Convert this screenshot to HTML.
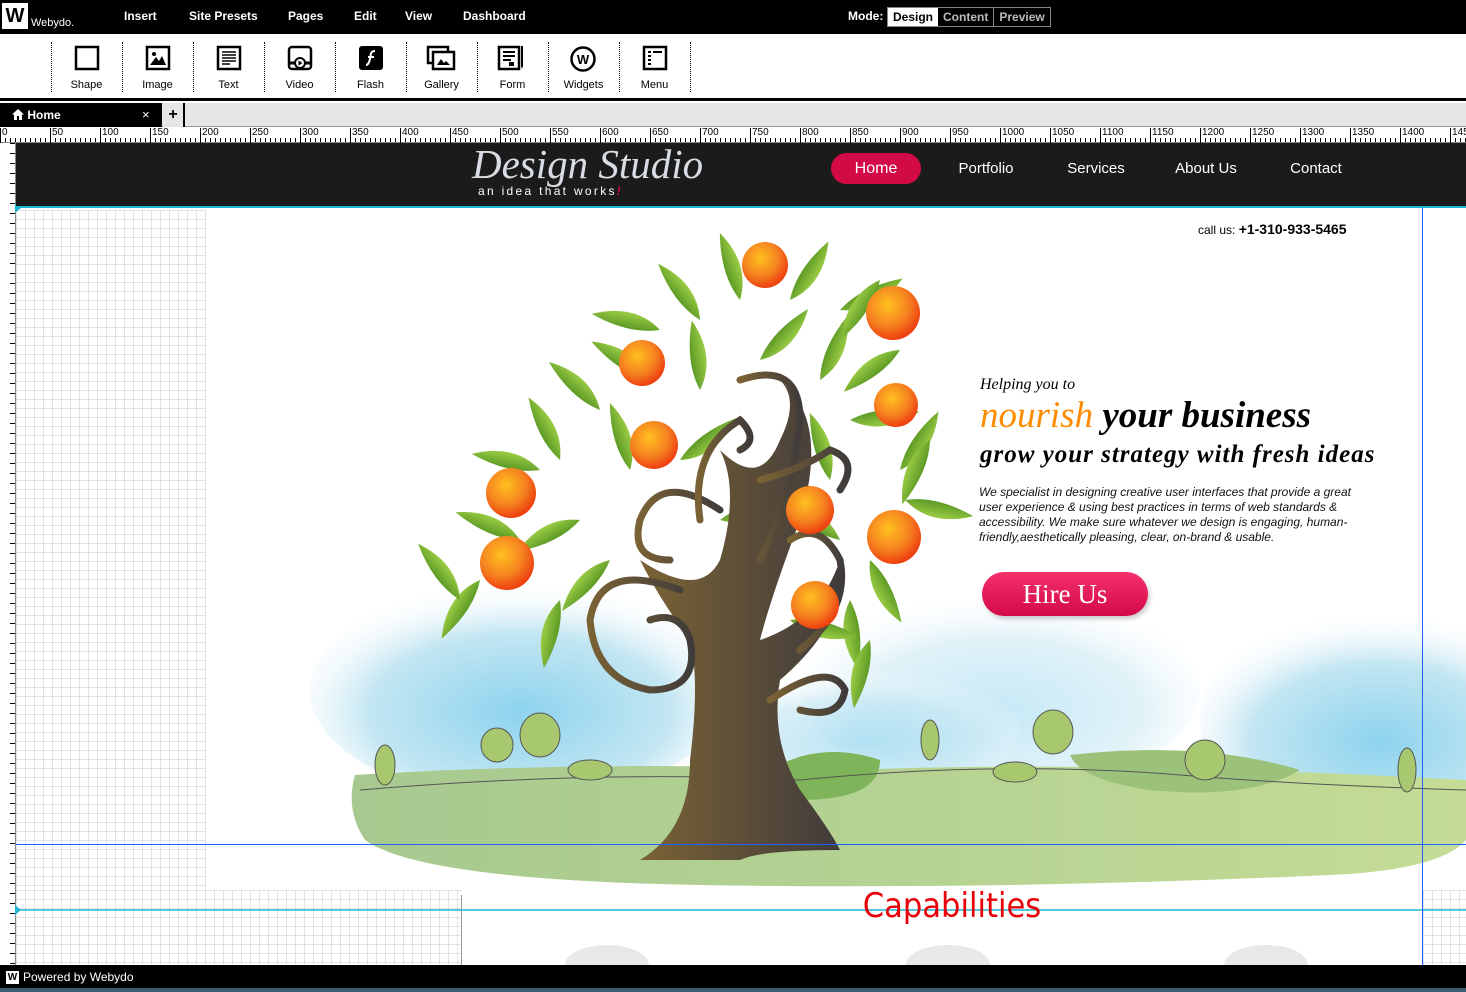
<!DOCTYPE html>
<html><head><meta charset="utf-8">
<style>
*{margin:0;padding:0;box-sizing:border-box}
body{width:1466px;height:992px;overflow:hidden;position:relative;background:#fff;font-family:"Liberation Sans",Arial,sans-serif}
.abs{position:absolute}
#top{left:0;top:0;width:1466px;height:34px;background:#000}
.menu{position:absolute;top:9px;color:#fff;font-weight:bold;font-size:12px}
#tb{left:0;top:34px;width:1466px;height:67px;background:#fff;border-bottom:3px solid #000}
.tool{position:absolute;top:8px;width:71px;height:52px;text-align:center;font-size:11px;color:#000}
.sep{position:absolute;top:8px;height:50px;border-left:1px dotted #000}
.tool .lbl{position:absolute;left:0;right:0;top:37px}
.tool svg{position:absolute;left:23px;top:3px}
#tabs{left:0;top:103px;width:1466px;height:24px;background:#e6e6e6;border-bottom:1px solid #999}
#hruler{left:0;top:127px;width:1466px;height:16px;background:#fff;border-bottom:1px solid #888;
background-image:repeating-linear-gradient(90deg,#000 0 1px,transparent 1px 5px);background-size:100% 5px;background-repeat:no-repeat;background-position:0 11px}
#hruler span{position:absolute;top:1px;font-size:10px;color:#000;border-left:1px solid #000;padding-left:1px;height:15px;line-height:10px}
#vruler{left:0;top:143px;width:16px;height:822px;background:#fff;border-right:1px solid #888;
background-image:repeating-linear-gradient(180deg,#000 0 1px,transparent 1px 10px);background-size:5px 100%;background-repeat:no-repeat;background-position:10px 0}
.grid{background-color:#fff;background-image:linear-gradient(90deg,rgba(200,200,200,.5) 1px,transparent 1px),linear-gradient(180deg,rgba(200,200,200,.5) 1px,transparent 1px);background-size:9px 9px}
#hdr{left:16px;top:143px;width:1450px;height:65px;background:#1b1b1b;border-bottom:2px solid #1fb6d2}
.nav{position:absolute;top:10px;color:#fff;font-family:"Liberation Sans Narrow","Liberation Sans",sans-serif;font-size:15px;text-align:center;width:90px;height:31px;line-height:31px}
#foot{left:0;top:965px;width:1466px;height:27px;background:#000;color:#fff;font-size:12px}
</style></head><body>

<div id="top" class="abs">
 <div class="abs" style="left:2px;top:3px;width:26px;height:26px;background:#fff;color:#000;font-weight:bold;font-size:20px;text-align:center;line-height:26px">W</div>
 <div class="abs" style="left:31px;top:17px;color:#fff;font-size:11px">Webydo.</div>
 <div class="menu" style="left:124px">Insert</div>
 <div class="menu" style="left:189px">Site Presets</div>
 <div class="menu" style="left:288px">Pages</div>
 <div class="menu" style="left:354px">Edit</div>
 <div class="menu" style="left:405px">View</div>
 <div class="menu" style="left:463px">Dashboard</div>
 <div class="menu" style="left:848px">Mode:</div>
 <div class="abs" style="left:887px;top:7px;height:20px;border:1px solid #888;display:flex;font-size:12px;font-weight:bold;line-height:18px">
  <div style="background:#fff;color:#000;padding:0 5px">Design</div>
  <div style="color:#bbb;padding:0 5px;border-right:1px solid #888">Content</div>
  <div style="color:#bbb;padding:0 5px">Preview</div>
 </div>
</div>

<div id="tb" class="abs">
 <div class="sep" style="left:51px"></div>
 <div class="tool" style="left:51px"><svg width="26" height="26"><rect x="2" y="2" width="22" height="22" fill="none" stroke="#000" stroke-width="2.5"/></svg><div class="lbl">Shape</div></div>
 <div class="sep" style="left:122px"></div>
 <div class="tool" style="left:122px"><svg width="26" height="26"><rect x="2" y="2" width="22" height="22" fill="none" stroke="#000" stroke-width="2.5"/><path d="M5 20 L11 12 L14 16 L17 11 L21 20Z" fill="#000"/><circle cx="9" cy="9" r="2" fill="#000"/></svg><div class="lbl">Image</div></div>
 <div class="sep" style="left:193px"></div>
 <div class="tool" style="left:193px"><svg width="26" height="26"><rect x="2" y="2" width="22" height="22" fill="none" stroke="#000" stroke-width="2.5"/><path d="M6 7h14M6 10h14M6 13h14M6 16h14M6 19h8" stroke="#000" stroke-width="1.6"/></svg><div class="lbl">Text</div></div>
 <div class="sep" style="left:264px"></div>
 <div class="tool" style="left:264px"><svg width="26" height="26"><rect x="2" y="2" width="22" height="22" rx="3" fill="none" stroke="#000" stroke-width="2.5"/><path d="M2 18h22" stroke="#000" stroke-width="3"/><circle cx="13" cy="18" r="5" fill="#fff" stroke="#000" stroke-width="2"/><path d="M11.5 15.5 L15.5 18 L11.5 20.5Z" fill="#000"/></svg><div class="lbl">Video</div></div>
 <div class="sep" style="left:335px"></div>
 <div class="tool" style="left:335px"><svg width="26" height="26"><rect x="1" y="1" width="24" height="24" rx="3" fill="#000"/><path d="M17 6 C12 6 13 10 12 14 C11 18 10 20 8 20 M10 12h6" stroke="#fff" stroke-width="2" fill="none"/></svg><div class="lbl">Flash</div></div>
 <div class="sep" style="left:406px"></div>
 <div class="tool" style="left:406px"><svg width="30" height="26" style="left:20px"><rect x="2" y="2" width="20" height="16" fill="none" stroke="#000" stroke-width="2.5"/><rect x="7" y="7" width="21" height="17" fill="#fff" stroke="#000" stroke-width="2.5"/><path d="M11 20 L15 14 L18 18 L20 16 L24 20Z" fill="#000"/></svg><div class="lbl">Gallery</div></div>
 <div class="sep" style="left:477px"></div>
 <div class="tool" style="left:477px"><svg width="30" height="28" style="left:20px"><rect x="2" y="2" width="20" height="22" fill="none" stroke="#000" stroke-width="2.5"/><path d="M6 7h12M6 11h12M6 15h8" stroke="#000" stroke-width="2"/><rect x="12" y="17" width="5" height="4" fill="#000"/><path d="M26 1v20l-1 3-1-3V1z" fill="#000"/></svg><div class="lbl">Form</div></div>
 <div class="sep" style="left:548px"></div>
 <div class="tool" style="left:548px"><svg width="28" height="28" style="left:21px"><circle cx="14" cy="14" r="11.5" fill="none" stroke="#000" stroke-width="2.5"/><text x="14" y="19" text-anchor="middle" font-family="Liberation Sans" font-weight="bold" font-size="13">W</text></svg><div class="lbl">Widgets</div></div>
 <div class="sep" style="left:619px"></div>
 <div class="tool" style="left:619px"><svg width="26" height="26"><rect x="2" y="2" width="22" height="22" fill="none" stroke="#000" stroke-width="2.5"/><path d="M6 7h3M11 7h9M6 11h3M6 15h3M6 19h3" stroke="#000" stroke-width="2"/></svg><div class="lbl">Menu</div></div>
 <div class="sep" style="left:690px"></div>
</div>

<div id="tabs" class="abs">
 <div class="abs" style="left:0;top:0;width:162px;height:24px;background:#000;color:#fff;font-weight:bold;font-size:12px;line-height:24px;padding-left:12px">
  <svg width="12" height="11" style="vertical-align:-1px"><path d="M6 0 L12 5.5 H10 V11 H7 V7 H5 V11 H2 V5.5 H0Z" fill="#fff"/></svg> Home
  <span style="position:absolute;left:142px;font-weight:normal;font-size:13px">×</span>
 </div>
 <div class="abs" style="left:163px;top:0;width:22px;height:24px;background:#e6e6e6;border-right:2px solid #000;text-align:center;font-weight:bold;font-size:16px;line-height:24px">+</div>
</div>

<div id="hruler" class="abs">
<span style="left:0">0</span><span style="left:50px">50</span><span style="left:100px">100</span><span style="left:150px">150</span><span style="left:200px">200</span><span style="left:250px">250</span><span style="left:300px">300</span><span style="left:350px">350</span><span style="left:400px">400</span><span style="left:450px">450</span><span style="left:500px">500</span><span style="left:550px">550</span><span style="left:600px">600</span><span style="left:650px">650</span><span style="left:700px">700</span><span style="left:750px">750</span><span style="left:800px">800</span><span style="left:850px">850</span><span style="left:900px">900</span><span style="left:950px">950</span><span style="left:1000px">1000</span><span style="left:1050px">1050</span><span style="left:1100px">1100</span><span style="left:1150px">1150</span><span style="left:1200px">1200</span><span style="left:1250px">1250</span><span style="left:1300px">1300</span><span style="left:1350px">1350</span><span style="left:1400px">1400</span><span style="left:1450px">1450</span>
</div>
<div id="vruler" class="abs"></div>

<div class="abs grid" style="left:16px;top:210px;width:190px;height:680px"></div>
<div class="abs grid" style="left:16px;top:890px;width:446px;height:75px"></div>
<div class="abs" style="left:461px;top:895px;width:1px;height:70px;background:#999"></div>
<div class="abs grid" style="left:1423px;top:890px;width:43px;height:75px"></div>

<svg class="abs" style="left:0;top:0" width="1466" height="992">
 <defs>
  <radialGradient id="sky" cx="50%" cy="60%" r="60%"><stop offset="0" stop-color="#8dd3ee"/><stop offset=".6" stop-color="#c3e6f2"/><stop offset="1" stop-color="#fff" stop-opacity="0"/></radialGradient>
  <linearGradient id="gr" x1="0" x2="1"><stop offset="0" stop-color="#a7c98f"/><stop offset="1" stop-color="#c4dc96"/></linearGradient>
  <linearGradient id="tr" x1="0" x2="1"><stop offset="0" stop-color="#7a6234"/><stop offset="1" stop-color="#403b3b"/></linearGradient>
  <radialGradient id="or" cx="40%" cy="35%" r="65%"><stop offset="0" stop-color="#ffc020"/><stop offset=".6" stop-color="#f58220"/><stop offset="1" stop-color="#ee4010"/></radialGradient>
  <linearGradient id="lf" x1="0" x2="1"><stop offset="0" stop-color="#5c9a25"/><stop offset="1" stop-color="#9ccc45"/></linearGradient>
  <path id="L" d="M0 0 Q22 -30 4 -70 Q-10 -30 0 0Z"/>
 </defs>
 <ellipse cx="520" cy="690" rx="210" ry="110" fill="url(#sky)"/>
 <ellipse cx="1000" cy="690" rx="200" ry="100" fill="url(#sky)" opacity=".5"/>
 <ellipse cx="1380" cy="720" rx="180" ry="110" fill="url(#sky)"/>
 <ellipse cx="860" cy="730" rx="160" ry="60" fill="url(#sky)" opacity=".6"/>
 <path d="M355 775 Q600 760 850 770 Q1100 760 1466 780 L1466 840 Q1440 870 1330 875 Q1000 890 700 885 Q420 880 365 840 Q345 810 355 775Z" fill="url(#gr)"/>
 <path d="M1070 755 Q1200 740 1300 770 Q1250 800 1150 790 Q1080 780 1070 755Z" fill="#9cc27a"/>
 <path d="M770 770 Q820 740 880 760 Q880 800 800 800 Q770 790 770 770Z" fill="#7fb45a"/>
 <path d="M360 790 Q600 770 800 780 Q1000 760 1180 775 Q1300 785 1466 790" stroke="#555" stroke-width="1" fill="none"/>
 <g fill="#a8c870" stroke="#555" stroke-width="1">
  <ellipse cx="385" cy="765" rx="10" ry="20"/><ellipse cx="497" cy="745" rx="16" ry="17"/><ellipse cx="540" cy="735" rx="20" ry="22"/>
  <ellipse cx="930" cy="740" rx="9" ry="20"/><ellipse cx="1053" cy="732" rx="20" ry="22"/><ellipse cx="1205" cy="760" rx="20" ry="20"/><ellipse cx="1407" cy="770" rx="9" ry="22"/><ellipse cx="590" cy="770" rx="22" ry="10"/><ellipse cx="1015" cy="772" rx="22" ry="10"/>
 </g>
 <g fill="url(#lf)">
  <use href="#L" transform="translate(740,300) rotate(-20)"/>
  <use href="#L" transform="translate(790,300) rotate(30)"/>
  <use href="#L" transform="translate(840,310) rotate(60)"/>
  <use href="#L" transform="translate(700,320) rotate(-40)"/>
  <use href="#L" transform="translate(650,380) rotate(-60)"/>
  <use href="#L" transform="translate(700,390) rotate(-10)"/>
  <use href="#L" transform="translate(760,360) rotate(40)"/>
  <use href="#L" transform="translate(820,380) rotate(20)"/>
  <use href="#L" transform="translate(850,420) rotate(80)"/>
  <use href="#L" transform="translate(900,470) rotate(30)"/>
  <use href="#L" transform="translate(905,500) rotate(100)"/>
  <use href="#L" transform="translate(870,560) rotate(150)"/>
  <use href="#L" transform="translate(850,600) rotate(170)"/>
  <use href="#L" transform="translate(830,480) rotate(-20)"/>
  <use href="#L" transform="translate(600,410) rotate(-50)"/>
  <use href="#L" transform="translate(560,460) rotate(-30)"/>
  <use href="#L" transform="translate(540,470) rotate(-80)"/>
  <use href="#L" transform="translate(580,520) rotate(-120)"/>
  <use href="#L" transform="translate(520,540) rotate(-70)"/>
  <use href="#L" transform="translate(480,580) rotate(-150)"/>
  <use href="#L" transform="translate(560,600) rotate(-170)"/>
  <use href="#L" transform="translate(610,560) rotate(-140)"/>
  <use href="#L" transform="translate(630,470) rotate(-20)"/>
  <use href="#L" transform="translate(680,460) rotate(50)"/>
  <use href="#L" transform="translate(720,520) rotate(70)"/>
  <use href="#L" transform="translate(900,350) rotate(-130)"/>
  <use href="#L" transform="translate(930,440) rotate(-160)"/>
  <use href="#L" transform="translate(840,540) rotate(-60)"/>
  <use href="#L" transform="translate(790,620) rotate(100)"/>
  <use href="#L" transform="translate(870,640) rotate(190)"/>
  <use href="#L" transform="translate(880,280) rotate(-150)"/>
  <use href="#L" transform="translate(460,600) rotate(-40)"/>
  <use href="#L" transform="translate(660,330) rotate(-80)"/>
 </g>
 <path d="M640 860 Q690 830 690 760 Q700 680 690 640 Q660 600 640 560 Q700 600 720 560 Q740 490 720 450 Q760 490 780 440 Q800 400 780 380 Q830 420 800 520 Q770 600 760 640 Q820 620 840 560 Q850 620 780 680 Q770 740 800 790 Q830 830 840 850 Q760 850 740 860Z" fill="url(#tr)"/>
 <g fill="none" stroke="url(#tr)" stroke-width="7" stroke-linecap="round">
  <path d="M740 380 Q800 360 800 420 Q790 500 760 560"/>
  <path d="M720 510 Q660 470 640 520 Q630 560 670 560"/>
  <path d="M680 590 Q600 560 590 620 Q595 680 650 690 Q700 690 690 640 Q680 610 650 620"/>
  <path d="M800 650 Q850 610 840 560 Q820 520 790 540"/>
  <path d="M770 700 Q830 660 845 690 Q840 720 800 710"/>
  <path d="M760 480 Q800 470 830 450 Q860 460 840 490"/>
  <path d="M700 520 Q690 450 740 420 Q760 440 740 450"/>
 </g>
 <g fill="url(#or)">
  <circle cx="765" cy="265" r="23"/><circle cx="893" cy="313" r="27"/><circle cx="642" cy="363" r="23"/><circle cx="896" cy="405" r="22"/><circle cx="654" cy="445" r="24"/><circle cx="511" cy="493" r="25"/><circle cx="810" cy="510" r="24"/><circle cx="894" cy="537" r="27"/><circle cx="507" cy="563" r="27"/><circle cx="815" cy="605" r="24"/>
 </g>
 <line x1="16" y1="844.5" x2="1466" y2="844.5" stroke="#2060ff" stroke-width="1"/>
 <line x1="16" y1="910" x2="1466" y2="910" stroke="#1fb6d2" stroke-width="1.5"/>
 <line x1="1422.5" y1="143" x2="1422.5" y2="965" stroke="#2060ff" stroke-width="1"/>
 <path d="M15 905 L21 910 L15 915Z" fill="#1fb6d2"/>
 <path d="M15 203 L21 208 L15 213Z" fill="#1fb6d2"/>
 <g fill="#e8e8e8"><ellipse cx="607" cy="965" rx="42" ry="20"/><ellipse cx="948" cy="965" rx="42" ry="20"/><ellipse cx="1266" cy="965" rx="42" ry="20"/></g>
</svg>

<div id="hdr" class="abs">
 <div class="abs" style="left:456px;top:-3px;font-family:'Liberation Serif',serif;font-style:italic;font-size:41px;color:#d8dde3;white-space:nowrap">Design Studio</div>
 <div class="abs" style="left:462px;top:41px;font-size:12px;color:#fff;letter-spacing:2.3px;white-space:nowrap">an idea that works<span style="color:#d20a46;font-style:italic;font-weight:bold">!</span></div>
 <div class="nav" style="left:815px;background:#d20a46;border-radius:16px;font-size:16px">Home</div>
 <div class="nav" style="left:925px">Portfolio</div>
 <div class="nav" style="left:1035px">Services</div>
 <div class="nav" style="left:1145px">About Us</div>
 <div class="nav" style="left:1255px">Contact</div>
</div>

<div class="abs" style="left:1198px;top:221px;font-size:12px;color:#000">call us: <b style="font-size:14px">+1-310-933-5465</b></div>
<div class="abs" style="left:980px;top:376px;font-family:'Liberation Serif',serif;font-style:italic;font-size:16px;color:#000">Helping you to</div>
<div class="abs" style="left:980px;top:394px;font-family:'Liberation Serif',serif;font-style:italic;font-weight:bold;font-size:37px;color:#000;white-space:nowrap"><span style="color:#ff8c00;font-weight:normal">nourish</span> your business</div>
<div class="abs" style="left:980px;top:441px;font-family:'Liberation Serif',serif;font-style:italic;font-weight:bold;font-size:25px;color:#000;white-space:nowrap;letter-spacing:1px">grow your strategy with fresh ideas</div>
<div class="abs" style="left:979px;top:485px;width:385px;font-style:italic;font-size:12px;line-height:15px;color:#111">We specialist in designing creative user interfaces that provide a great user experience &amp; using best practices in terms of web standards &amp; accessibility. We make sure whatever we design is engaging, human-friendly,aesthetically pleasing, clear, on-brand &amp; usable.</div>
<div class="abs" style="left:982px;top:572px;width:166px;height:44px;border-radius:22px;background:linear-gradient(#f4306c,#d30a48);box-shadow:2px 3px 4px rgba(0,0,0,.2);color:#fff;font-family:'Liberation Serif',serif;font-size:27px;text-align:center;line-height:44px">Hire Us</div>

<div class="abs" style="left:800px;top:886px;width:304px;text-align:center;font-family:'DejaVu Sans Condensed','DejaVu Sans',sans-serif;font-size:34px;color:#e8000a">Capabilities</div>

<div id="foot" class="abs">
 <div class="abs" style="left:6px;top:6px;width:13px;height:13px;background:#fff;color:#000;font-size:10px;font-weight:bold;text-align:center;line-height:13px">W</div>
 <div class="abs" style="left:23px;top:5px">Powered by Webydo</div>
 <div class="abs" style="left:0;top:23px;width:1466px;height:4px;background:#3a5a70"></div>
</div>
</body></html>
